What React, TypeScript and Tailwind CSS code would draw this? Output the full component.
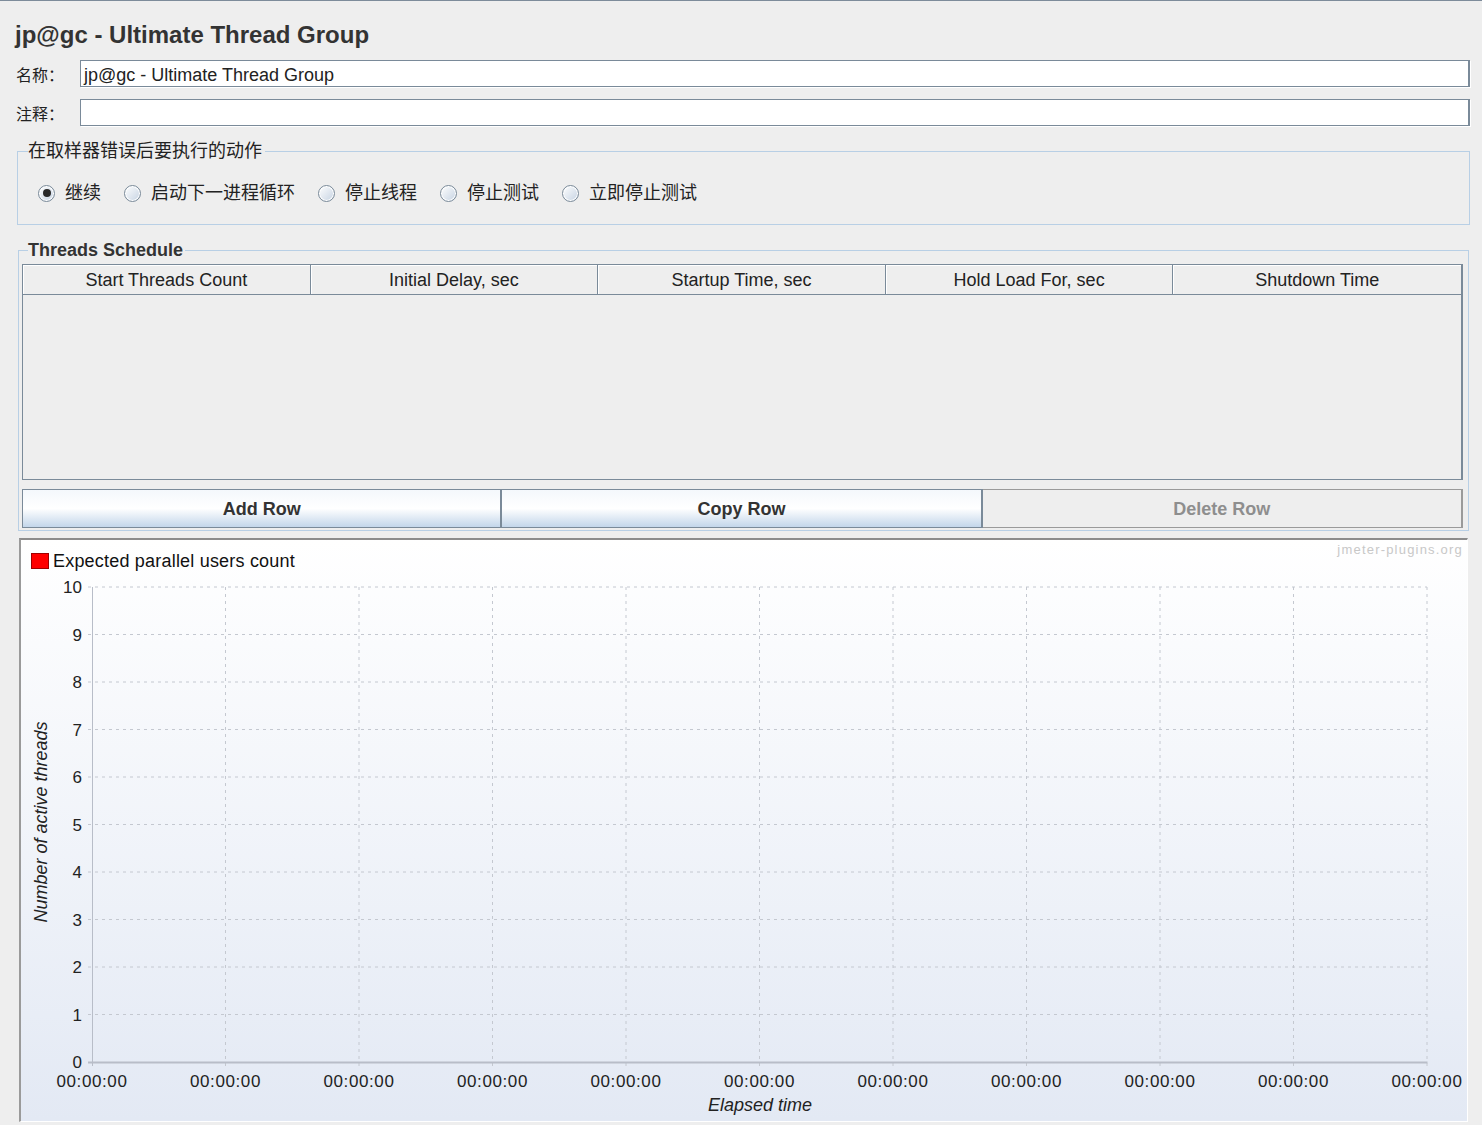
import React from "react";

const sans = { fontFamily: '"Liberation Sans", Arial, sans-serif' };
const cjk = { fontFamily: '"Liberation Sans", "Noto Sans CJK SC", sans-serif' };

function Radio({ checked, label }: { checked?: boolean; label: string }) {
  return (
    <label className="flex items-center gap-[10px]">
      <span className="w-[17px] h-[17px] rounded-full border border-[#7a8a99] bg-linear-to-br from-white to-[#c6d3e2] flex items-center justify-center shadow-[inset_0_0_0_1px_#ffffff]">
        {checked && <span className="w-[8px] h-[8px] rounded-full bg-[#2a2a2a]" />}
      </span>
      <span className="text-[18px] leading-[22px] text-[#222]" style={cjk}>
        {label}
      </span>
    </label>
  );
}

function Field({ label, value }: { label: string; value?: string }) {
  return (
    <div className="flex items-center h-[27px]">
      <div className="w-[65px] pl-[1px] pt-[5px] h-[27px] leading-[22px] text-[16px] text-[#222]" style={cjk}>
        {label}
      </div>
      <div className="flex-1 h-[27px] bg-white border border-[#7a8a99] border-r-2 shadow-[1px_1px_0_#ffffff] flex items-center px-[3px] pt-[4px] text-[18px] text-[#222]" style={sans}>
        {value}
      </div>
    </div>
  );
}

function Chart() {
  const W = 1445;
  const H = 546;
  const left = 71;
  const right = 1406;
  const top = 12;
  const bottom = 487;
  const xs = Array.from({ length: 11 }, (_, i) => left + i * 133.5);
  const ys = Array.from({ length: 11 }, (_, i) => top + i * 47.5);
  const grid = "#c4c8d0";
  const axis = "#b8bdc8";
  return (
    <svg width={W} height={H} className="block">
      {ys.slice(0, 10).map((y, i) => (
        <line key={"h" + i} x1={left - 4} x2={right} y1={y} y2={y} stroke={grid} strokeWidth={1} strokeDasharray="3 4" />
      ))}
      {xs.slice(1).map((x, i) => (
        <line key={"v" + i} x1={x} x2={x} y1={top} y2={bottom + 4} stroke={grid} strokeWidth={1} strokeDasharray="3 4" />
      ))}
      <line x1={left + 0.5} x2={left + 0.5} y1={top} y2={bottom + 4} stroke={axis} strokeWidth={1} />
      <line x1={left - 4} x2={right + 0.5} y1={bottom + 0.5} y2={bottom + 0.5} stroke={axis} strokeWidth={2} />
      {ys.map((y, i) => (
        <text key={"yl" + i} x={61} y={y + 6} textAnchor="end" fontSize={17} fill="#222" style={sans}>
          {10 - i}
        </text>
      ))}
      {xs.map((x, i) => (
        <text key={"xl" + i} x={x} y={512} textAnchor="middle" fontSize={17} letterSpacing={0.6} fill="#222" style={sans}>
          00:00:00
        </text>
      ))}
      <text x={(left + right) / 2 + 0.5} y={536} textAnchor="middle" fontSize={18} fontStyle="italic" fill="#222" style={sans}>
        Elapsed time
      </text>
      <text
        x={0}
        y={0}
        transform={`translate(26 ${247}) rotate(-90)`}
        textAnchor="middle"
        fontSize={18}
        fontStyle="italic"
        fill="#222"
        style={sans}
      >
        Number of active threads
      </text>
    </svg>
  );
}

export default function App() {
  const headers = ["Start Threads Count", "Initial Delay, sec", "Startup Time, sec", "Hold Load For, sec", "Shutdown Time"];
  return (
    <div className="w-[1482px] h-[1125px] bg-[#eeeeee] border-t border-[#7d8b9a] overflow-hidden text-[#222]" style={sans}>
      <div className="pl-[15px] pr-[12px]">
        <div className="pt-[20px] text-[24px] leading-[28px] font-bold text-[#333]">jp@gc - Ultimate Thread Group</div>

        <div className="mt-[11px] flex flex-col gap-[12px]">
          <Field label="名称：" value="jp@gc - Ultimate Thread Group" />
          <Field label="注释：" />
        </div>

        <fieldset className="mt-[14px] ml-[2px] border border-[#b8cfe5] px-0 pb-[20px]">
          <legend className="ml-[10px] pr-[3px] text-[18px] leading-[22px] text-[#222]" style={cjk}>
            在取样器错误后要执行的动作
          </legend>
          <div className="pt-[20px] pl-[20px] flex items-center gap-[23px]">
            <Radio checked label="继续" />
            <Radio label="启动下一进程循环" />
            <Radio label="停止线程" />
            <Radio label="停止测试" />
            <Radio label="立即停止测试" />
          </div>
        </fieldset>

        <fieldset className="mt-[14px] ml-[3px] mr-[1px] border border-[#b8cfe5] pl-[3px] pr-[5px] pb-[2px]">
          <legend className="ml-[6px] pr-[2px] text-[18px] leading-[22px] font-bold text-[#333]">Threads Schedule</legend>
          <div className="pt-[3px]">
            <div className="border border-[#7a8a99] border-r-2">
              <div className="grid grid-cols-5 h-[30px]">
                {headers.map((h, i) => (
                  <div
                    key={h}
                    className={
                      "flex items-center justify-center pt-[2px] text-[18px] text-[#222] border-b border-[#7a8a99] bg-[#eeeeee] shadow-[inset_1px_1px_0_#ffffff] " +
                      (i < 4 ? "border-r" : "")
                    }
                  >
                    {h}
                  </div>
                ))}
              </div>
              <div className="h-[184px] bg-[#eeeeee]" />
            </div>
            <div className="mt-[9px] grid grid-cols-3 h-[39px]">
              <button className="bg-linear-to-b from-[#f4f8fc] via-[#ffffff] to-[#c3d6ea] border border-[#7a8a99] border-r-2 pt-[2px] text-[18px] font-bold text-[#333]">
                Add Row
              </button>
              <button className="bg-linear-to-b from-[#f4f8fc] via-[#ffffff] to-[#c3d6ea] border border-[#7a8a99] border-l-0 border-r-2 pt-[2px] text-[18px] font-bold text-[#333]">
                Copy Row
              </button>
              <button className="bg-[#eeeeee] border border-[#9a9a9a] border-l-0 border-r-2 pt-[2px] text-[18px] font-bold text-[#8e8e8e]">
                Delete Row
              </button>
            </div>
          </div>
        </fieldset>

        <div className="mt-[7px] ml-[4px] mr-[2px] h-[584px] border-t-2 border-l-2 border-t-[#8c8c8c] border-l-[#9a9a9a] border-r border-b border-r-white border-b-white bg-linear-to-b from-white to-[#e3e9f4] flex flex-col">
          <div className="h-[35px] flex items-start justify-between pl-[10px] pr-[4px]">
            <div className="mt-[12px] flex items-center gap-[4px]">
              <span className="w-[18px] h-[16px] bg-[#ff0000] border border-[#a00000]" />
              <span className="text-[18px] leading-[18px] tracking-[0.2px] text-[#111]">Expected parallel users count</span>
            </div>
            <span className="mt-[0px] text-[13px] tracking-[1.2px] text-[#c8c8c8]">jmeter-plugins.org</span>
          </div>
          <Chart />
        </div>
      </div>
    </div>
  );
}
